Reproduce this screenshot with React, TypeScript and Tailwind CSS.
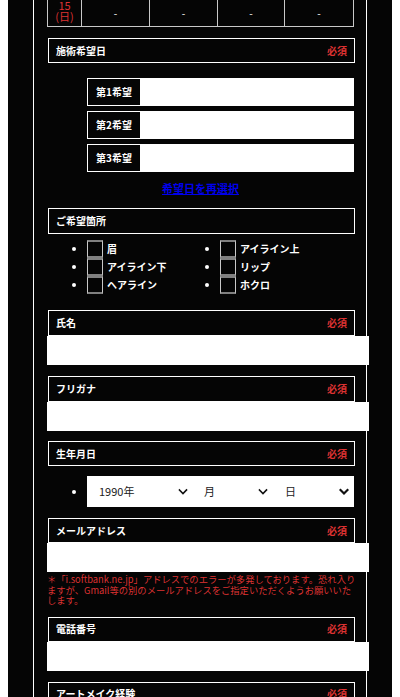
import React from "react";

const RED = "text-[#dc3232]";

function Header({ label, required = true, h = "h-[25px]" }: { label: string; required?: boolean; h?: string }) {
  return (
    <div className={`ml-px w-[307px] ${h} border border-white bg-[#050505] flex items-center justify-between pl-[7px] pr-[7px]`}>
      <span className="text-[10px] leading-none font-bold text-white">{label}</span>
      {required && <span className={`text-[10px] leading-none font-bold ${RED}`}>必須</span>}
    </div>
  );
}

function WhiteInput() {
  return <div className="w-[322px] h-[29px] bg-white" />;
}

function Chevron({ w = 2 }: { w?: number }) {
  return (
    <svg width="10" height="8" viewBox="0 0 10 8" className="shrink-0">
      <path d="M1.5 2 L5 5.5 L8.5 2" fill="none" stroke="#111" strokeWidth={w} strokeLinecap="square" />
    </svg>
  );
}

function Check({ label }: { label: string }) {
  return (
    <div className="flex items-center h-[18px]">
      <span className="w-[4px] h-[4px] rounded-full bg-white shrink-0" />
      <span className="ml-[11px] w-[16px] h-[18px] shrink-0 border-y-2 border-y-[#808080] border-x border-x-[#c8c8c8]" />
      <span className="ml-[4px] text-[10px] leading-none font-bold text-white whitespace-nowrap">{label}</span>
    </div>
  );
}

export default function App() {
  const cols = ["w-[34px]", "w-[68px]", "w-[68px]", "w-[67px]", "w-[69px]"];
  return (
    <div className="min-h-screen bg-white px-2 font-['Noto_Sans_CJK_JP','Noto_Sans',sans-serif]">
      <div className="bg-[#050505] min-h-[697px] h-[697px] overflow-hidden pl-[25px]">
        <div className="w-[334px] h-full border-x border-white pl-[13px]">
          {/* schedule table tail */}
          <div className="flex h-[27px] w-[307px] border-l border-b border-[#c8c8c8]">
            {cols.map((c, i) => (
              <div key={i} className={`${c} h-full border-r border-[#c8c8c8] flex flex-col items-center ${i === 0 ? "justify-start" : "justify-center"}`}>
                {i === 0 ? (
                  <div className={`text-[11px] leading-[10.5px] ${RED} text-center`}>
                    <div>15</div>
                    <div>(日)</div>
                  </div>
                ) : (
                  <span className="text-[10px] leading-none text-white">-</span>
                )}
              </div>
            ))}
          </div>

          <div className="mt-[11px]">
            <Header label="施術希望日" />
          </div>

          <div className="mt-[15px] ml-[40px] flex flex-col gap-[5px]">
            {["第1希望", "第2希望", "第3希望"].map((t) => (
              <div key={t} className="w-[267px] h-[28px] flex border border-white bg-white">
                <div className="w-[52px] h-full bg-[#050505] flex items-center justify-center">
                  <span className="text-[10px] leading-none font-bold text-white">{t}</span>
                </div>
                <div className="flex-1 bg-white" />
              </div>
            ))}
          </div>

          <div className="mt-[9px] w-[307px] text-center text-[11px] leading-[14px] h-[14px]">
            <span className="font-bold text-[#0000ee] underline">希望日を再選択</span>
          </div>

          <div className="mt-[13px]">
            <Header label="ご希望箇所" required={false} h="h-[26px]" />
          </div>

          <div className="mt-[6px] pl-[25px] grid grid-cols-[133px_1fr]">
            <Check label="眉" />
            <Check label="アイライン上" />
            <Check label="アイライン下" />
            <Check label="リップ" />
            <Check label="ヘアライン" />
            <Check label="ホクロ" />
          </div>

          <div className="mt-[16px]">
            <Header label="氏名" h="h-[26px]" />
          </div>
          <WhiteInput />

          <div className="mt-[11px]">
            <Header label="フリガナ" h="h-[26px]" />
          </div>
          <WhiteInput />

          <div className="mt-[10px]">
            <Header label="生年月日" />
          </div>
          <div className="mt-[10px] pl-[25px] flex items-center">
            <span className="w-[4px] h-[4px] rounded-full bg-white shrink-0" />
            <div className="ml-[11px] w-[267px] h-[31px] bg-white flex items-center text-[11px] leading-none text-[#222]">
              <div className="w-[104px] pl-[12px] pr-[3px] flex items-center justify-between">
                <span>1990年</span>
                <Chevron w={1.6} />
              </div>
              <div className="w-[81px] pl-[13px] pr-[4px] flex items-center justify-between">
                <span>月</span>
                <Chevron w={1.6} />
              </div>
              <div className="w-[82px] pl-[13px] pr-[5px] flex items-center justify-between">
                <span>日</span>
                <Chevron w={2.2} />
              </div>
            </div>
          </div>

          <div className="mt-[11px]">
            <Header label="メールアドレス" />
          </div>
          <WhiteInput />
          <div className={`mt-[2px] text-[9.3px] leading-[10.5px] ${RED} whitespace-nowrap`}>
            <div>＊「i.softbank.ne.jp」アドレスでのエラーが多発しております。恐れ入り</div>
            <div>ますが、Gmail等の別のメールアドレスをご指定いただくようお願いいた</div>
            <div>します。</div>
          </div>

          <div className="mt-[11px]">
            <Header label="電話番号" />
          </div>
          <WhiteInput />

          <div className="mt-[11px]">
            <Header label="アートメイク経験" />
          </div>
        </div>
      </div>
    </div>
  );
}
